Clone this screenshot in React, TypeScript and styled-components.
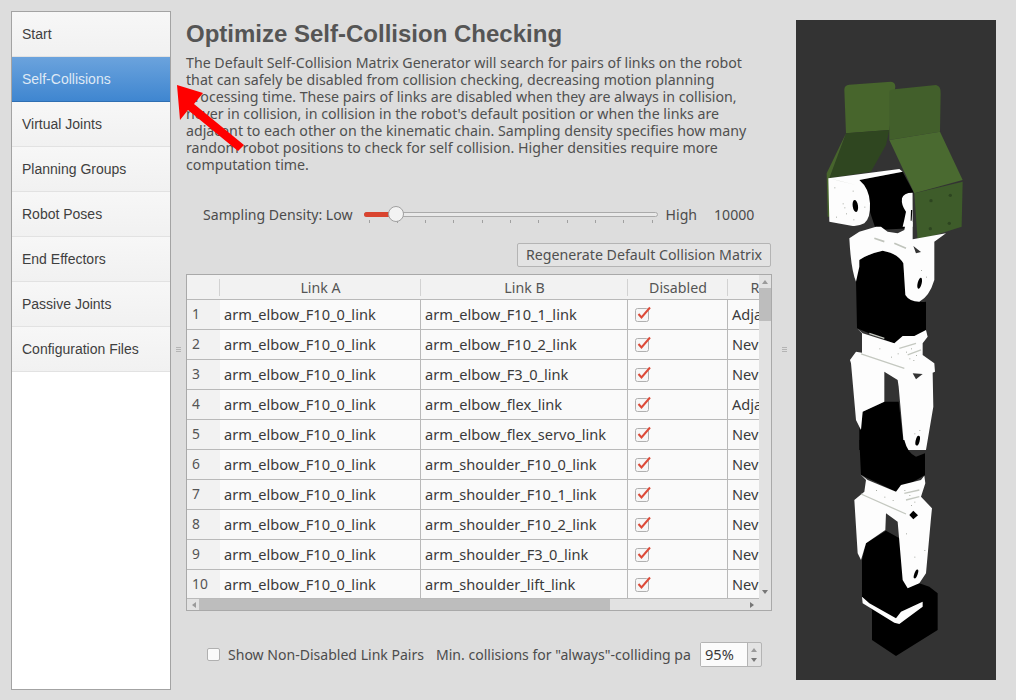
import React from "react";
import styled, { createGlobalStyle } from "styled-components";

const Global = createGlobalStyle`
  html, body { margin: 0; padding: 0; background: #dddddd; }
  #root { width: 1016px; height: 700px; }
  * { box-sizing: border-box; }
`;

const UI = `"Noto Sans", "DejaVu Sans", sans-serif`;

const Page = styled.div`
  position: relative; width: 1016px; height: 700px; display: flex; overflow: hidden;
  padding: 11px 0 10px 11px; background: #dddddd; font-family: ${UI}; color: #4c4c4c;
`;
const Nav = styled.nav`
  width: 160px; flex: none; height: 679px; border: 1px solid #a3a3a3; background: #ffffff;
  display: flex; flex-direction: column;
`;
const NavItem = styled.div<{ $active?: boolean }>`
  height: 45px; flex: none; padding-left: 10px; display: flex; align-items: center;
  font: 14px "Liberation Sans", Arial, sans-serif;
  color: ${p => (p.$active ? "#dfe9f5" : "#3f3f3f")};
  background: ${p => p.$active ? "linear-gradient(#6ba3dd, #3f86d0)" : "linear-gradient(#f7f7f7, #f1f1f1)"};
  border-bottom: 1px solid ${p => (p.$active ? "#2f6fb2" : "#e2e2e2")};
`;
const Handle = styled.div<{ $w: number }>`
  width: ${p => p.$w}px; flex: none; display: flex; flex-direction: column; align-items: center;
  justify-content: center; gap: 1px; padding-bottom: 2px;
  i { display: block; width: 5px; height: 1px; background: #b4b4b4; }
`;
const Main = styled.main`
  width: 586px; flex: none; display: flex; flex-direction: column;
`;
const Title = styled.h1`
  margin: 8px 0 0; font: bold 24px/29px "Liberation Sans", Arial, sans-serif; color: #555555; white-space: nowrap;
`;
const Intro = styled.p`
  margin: 6px 0 0; font-size: 14.2px; line-height: 17px; white-space: nowrap; color: #505050;
`;
const SliderRow = styled.div`
  margin-top: 29px; height: 24px; padding-left: 17px; display: flex; align-items: center;
  font-size: 14.1px; white-space: nowrap;
`;
const Track = styled.div`
  position: relative; width: 294px; height: 5px; margin: 0 8px 0 11px; border: 1px solid #aaaaaa;
  border-radius: 3px; background: #e9e9e9;
`;
const TrackFill = styled.div`
  position: absolute; left: -1px; top: -1px; width: 30px; height: 5px; border-radius: 3px; background: #d9442f;
`;
const Knob = styled.div`
  position: absolute; left: 23px; top: -7px; width: 16px; height: 16px; border-radius: 50%;
  background: #f3f3f3; border: 1px solid #a0a0a0;
`;
const Ticks = styled.div`
  position: absolute; left: 4px; right: 4px; top: 7px; display: flex; justify-content: space-between;
  i { width: 1px; height: 3px; background: #a0a0a0; }
`;
const Value = styled.span`
  margin-left: 17px;
`;
const ButtonRow = styled.div`
  margin-top: 17px; display: flex; justify-content: flex-end; padding-right: 1px;
`;
const Btn = styled.button`
  height: 24px; width: 254px; padding: 0 0 1px; border: 1px solid #b4b4b4; border-radius: 2px; background: #e3e3e3;
  font: 14.2px ${UI}; color: #505050; white-space: nowrap;
`;
const TableFrame = styled.div`
  margin-top: 7px; width: 586px; height: 337px; border: 1px solid #a9a9a9; background: #fafafa;
  display: grid; grid-template-columns: 572px 12px; grid-template-rows: 323px 12px;
`;
const TableView = styled.div`
  overflow: hidden; display: flex; flex-direction: column;
`;
const Row = styled.div`
  display: grid; grid-template-columns: 33px 201px 207px 100px 94px; flex: none; height: 30px;
  border-bottom: 1px solid #b9b9b9; font-size: 14.6px; color: #3a3a3a;
`;
const HeaderRow = styled(Row)`
  height: 25px; background: #f2f2f2; color: #555555; border-bottom: 1px solid #b9b9b9; font-size: 14.2px;
`;
const Head = styled.div`
  position: relative; display: flex; align-items: center; justify-content: center; white-space: nowrap; overflow: hidden;
  &::after { content: ""; position: absolute; right: 0; top: 4px; bottom: 3px; width: 1px; background: #d2d2d2; }
`;
const RowNum = styled.div`
  background: #f2f2f2; display: flex; align-items: center; padding: 0 0 2px 5px; font-size: 13.8px; color: #555555;
`;
const Cell = styled.div`
  display: flex; align-items: center; padding: 0 0 2px 4px; border-right: 1px solid #b9b9b9; overflow: hidden; white-space: nowrap; background: #fafafa;
`;
const CheckCell = styled(Cell)`
  padding-left: 7px;
`;
const LastCell = styled(Cell)`
  border-right: 0;
`;
const VBar = styled.div`
  background: #e2e2e2; display: flex; flex-direction: column; align-items: center; position: relative;
`;
const ThumbV = styled.div`
  margin-top: 13px; width: 12px; height: 33px; background: #bdbdbd;
`;
const Arrow = styled.span<{ $dir: string }>`
  position: absolute; width: 0; height: 0;
  ${p => p.$dir === "up" && "top: 5px; left: 3px; border: 3px solid transparent; border-top: 0; border-bottom: 4px solid #9a9a9a;"}
  ${p => p.$dir === "down" && "bottom: 4px; left: 3px; border: 3px solid transparent; border-bottom: 0; border-top: 4px solid #777777;"}
  ${p => p.$dir === "left" && "left: 5px; top: 3px; border: 3px solid transparent; border-left: 0; border-right: 4px solid #9a9a9a;"}
  ${p => p.$dir === "right" && "right: 5px; top: 3px; border: 3px solid transparent; border-right: 0; border-left: 4px solid #777777;"}
`;
const HBar = styled.div`
  position: relative; background: #e2e2e2; padding-left: 12px; border-top: 1px solid #b9b9b9;
`;
const ThumbH = styled.div`
  width: 411px; height: 11px; background: #bdbdbd;
`;
const Corner = styled.div`
  background: #e2e2e2;
`;
const BottomRow = styled.div`
  margin-top: 30px; height: 28px; padding: 0 0 2px 21px; display: flex; align-items: center; font-size: 14.05px; white-space: nowrap;
`;
const Box = styled.span`
  width: 13px; height: 13px; border: 1px solid #b0b0b0; border-radius: 2px; background: #fafafa; margin-right: 8px;
`;
const MinLabel = styled.span`
  margin-left: 12px; width: 255px; overflow: hidden;
`;
const Spin = styled.div`
  margin-left: 9px; height: 25px; width: 62px; display: flex; border: 1px solid #b4b4b4; border-radius: 2px; background: #e3e3e3;
`;
const SpinValue = styled.div`
  width: 47px; background: #fbfbfb; border-right: 1px solid #b4b4b4; padding-left: 4px; display: flex; align-items: center; color: #3a3a3a; font-size: 14.6px;
`;
const SpinArrows = styled.div`
  flex: 1; position: relative;
`;
const Viewer = styled.div`
  width: 200px; height: 660px; flex: none; margin-top: 9px; background: #333333; overflow: hidden;
  svg { display: block; }
`;
const Overlay = styled.svg`
  position: absolute; left: 170px; top: 78px; pointer-events: none;
`;

const navItems = ["Start", "Self-Collisions", "Virtual Joints", "Planning Groups", "Robot Poses", "End Effectors", "Passive Joints", "Configuration Files"];
const rows = [
  ["arm_elbow_F10_1_link", "Adjacent Links"],
  ["arm_elbow_F10_2_link", "Never in Collision"],
  ["arm_elbow_F3_0_link", "Never in Collision"],
  ["arm_elbow_flex_link", "Adjacent Links"],
  ["arm_elbow_flex_servo_link", "Never in Collision"],
  ["arm_shoulder_F10_0_link", "Never in Collision"],
  ["arm_shoulder_F10_1_link", "Never in Collision"],
  ["arm_shoulder_F10_2_link", "Never in Collision"],
  ["arm_shoulder_F3_0_link", "Never in Collision"],
  ["arm_shoulder_lift_link", "Never in Collision"],
];

const Check = () => (
  <svg width="17" height="16" viewBox="0 0 17 16">
    <rect x="0.5" y="2.5" width="13" height="13" rx="2" fill="#f6f6f6" stroke="#b0b0b0" />
    <path d="M3.5 8 L6.5 11.5 L15 1.5" fill="none" stroke="#dc4a38" strokeWidth="2" />
  </svg>
);

const specks1 = [[115, 352], [140, 400], [145, 412], [170, 362], [205, 410], [172, 448], [120, 440], [150, 430]];
const specks2 = [[240, 395], [250, 415], [262, 420], [270, 405], [255, 385], [215, 400], [195, 410], [160, 385], [285, 150], [300, 170], [265, 640], [280, 630]];
const specks3 = [[150, 150], [175, 170], [200, 180], [235, 150], [250, 165], [265, 185], [255, 195], [295, 330], [240, 280], [265, 350]];
const Specks = ({ pts }: { pts: number[][] }) => (
  <g fill="#a8aca4">{pts.map(([x, y]) => <rect key={`${x}-${y}`} x={x} y={y} width="3" height="3" />)}</g>
);

const Robot = () => (
  <svg width="200" height="660" viewBox="796 20 200 660">
    <g transform="translate(796 70) scale(.3333)">
      <path d="M190 330 L320 305 L352 365 L345 475 L240 480 Z" fill="#000" />
      <path d="M145 60 Q145 45 160 44 L285 35 Q298 36 298 50 L280 180 L150 190 Z" fill="#47652c" />
      <path d="M150 190 L280 180 L270 225 L225 305 L100 325 Z" fill="#2f4620" />
      <path d="M150 190 L92 310 L95 440 L103 440 L100 325 Z" fill="#47652c" />
      <path d="M97 325 L310 297 L320 305 L190 330 Q220 355 222 400 Q224 445 205 460 Q185 470 170 468 L100 455 Z" fill="#fdfdfd" />
      <path d="M100 325 L180 345 L130 333 Z" fill="#c4c8c0" />
      <ellipse cx="178" cy="408" rx="8" ry="18" transform="rotate(-8 178 408)" fill="#000" />
      <Specks pts={specks1} />
      <path d="M318 385 Q322 368 350 368 L350 470 L320 470 Q325 450 330 425 Q315 405 318 385 Z" fill="#fdfdfd" />
      <path d="M345 420 L349 420 L347 452 L344 452 Z" fill="#000" />
      <path d="M280 65 Q280 60 295 58 L420 45 Q435 48 434 70 L432 185 L280 210 Z" fill="#425f2b" />
      <path d="M280 210 L432 185 L500 330 L355 370 Z" fill="#4a6a30" />
      <path d="M355 370 L500 335 L497 470 L365 512 Z" fill="#3e5c2a" />
      <g fill="#2d4520">
        <circle cx="405" cy="392" r="5" /><circle cx="463" cy="376" r="5" />
        <circle cx="403" cy="476" r="5" /><circle cx="460" cy="460" r="5" />
      </g>
    </g>
    <g transform="translate(826 220) scale(.3333)">
      <path d="M100 120 Q130 100 170 92 Q215 100 232 130 L240 220 Q260 250 300 245 L300 335 L215 375 L93 325 L90 180 Z" fill="#000" />
      <path d="M70 55 L100 35 L150 20 L165 20 L185 35 L215 40 L235 30 L240 5 L260 5 L260 58 L360 40 L325 65 L325 180 Q310 230 280 245 Q250 245 238 225 L232 130 Q215 100 170 92 Q130 100 100 120 L100 140 L90 185 Q75 150 70 55 Z" fill="#fdfdfd" />
      <ellipse cx="281" cy="190" rx="6" ry="17" transform="rotate(14 281 190)" fill="#000" />
      <path d="M262 78 L270 100 L285 96 Z" fill="#333" />
      <path d="M145 55 L175 65 M205 70 L240 85" stroke="#c0c4bc" strokeWidth="5" />
      <path d="M175 545 L110 575 L100 630 L100 690 L235 690 L218 545 Z" fill="#000" />
      <path d="M93 325 L110 340 L205 370 L230 348 L265 348 L300 330 L305 350 L290 370 L290 405 L325 430 L327 455 L320 458 L322 560 L300 690 L235 690 L218 500 L215 480 L175 455 L175 545 L110 575 L105 630 L90 600 L75 430 L72 420 L90 395 L108 398 L108 340 Z" fill="#fdfdfd" />
      <path d="M105 402 L235 445 M130 340 L175 355 M220 385 L270 370 M245 405 L285 390" stroke="#c4c8c0" strokeWidth="4" />
      <Specks pts={specks2} />
      <path d="M260 460 L270 478 L290 462 Z" fill="#333" />
      <ellipse cx="275" cy="662" rx="6" ry="15" transform="rotate(14 275 662)" fill="#000" />
    </g>
    <g transform="translate(826 440) scale(.3333)">
      <path d="M100 0 L235 0 Q245 40 270 50 L297 40 L297 105 L210 155 L105 105 Z" fill="#000" />
      <path d="M180 272 L120 310 L108 360 L108 470 L138 510 L138 600 L210 648 L335 570 L335 460 L310 440 L280 430 L230 300 Z" fill="#000" />
      <path d="M103 103 L125 120 L210 155 L225 135 L285 120 L295 107 L298 130 L285 170 L318 205 L315 235 L300 400 L280 430 L245 445 L230 420 L215 245 L180 220 L178 270 L120 310 L105 360 L95 340 L85 180 L115 155 L120 120 Z" fill="#fdfdfd" />
      <path d="M105 162 L240 222 M235 160 L280 150 M240 180 L280 170" stroke="#c4c8c0" strokeWidth="4" />
      <Specks pts={specks3} />
      <path d="M250 225 L262 212 L276 226 L262 238 Z" fill="#000" />
      <ellipse cx="270" cy="402" rx="5" ry="14" transform="rotate(20 270 402)" fill="#000" />
      <path d="M108 470 L130 490 L210 535 L225 515 L280 490 L290 485 L290 500 L220 552 L205 548 L110 490 Z" fill="#fdfdfd" />
    </g>
  </svg>
);

export default function App() {
  return (
    <Page>
      <Global />
      <Nav>
        {navItems.map((n, i) => <NavItem key={n} $active={i === 1}>{n}</NavItem>)}
      </Nav>
      <Handle $w={15}><i /><i /><i /></Handle>
      <Main>
        <Title>Optimize Self-Collision Checking</Title>
        <Intro>
          The Default Self-Collision Matrix Generator will search for pairs of links on the robot<br />
          that can safely be disabled from collision checking, decreasing motion planning<br />
          processing time. These pairs of links are disabled when they are always in collision,<br />
          never in collision, in collision in the robot's default position or when the links are<br />
          adjacent to each other on the kinematic chain. Sampling density specifies how many<br />
          random robot positions to check for self collision. Higher densities require more<br />
          computation time.
        </Intro>
        <SliderRow>
          Sampling Density: Low
          <Track>
            <TrackFill />
            <Ticks>{Array.from({ length: 11 }).map((_, i) => <i key={i} />)}</Ticks>
            <Knob />
          </Track>
          High
          <Value>10000</Value>
        </SliderRow>
        <ButtonRow><Btn>Regenerate Default Collision Matrix</Btn></ButtonRow>
        <TableFrame>
          <TableView>
            <HeaderRow>
              <Head /><Head>Link A</Head><Head>Link B</Head><Head>Disabled</Head><Head>Reason</Head>
            </HeaderRow>
            {rows.map((r, i) => (
              <Row key={i}>
                <RowNum>{i + 1}</RowNum>
                <Cell>arm_elbow_F10_0_link</Cell>
                <Cell>{r[0]}</Cell>
                <CheckCell><Check /></CheckCell>
                <LastCell>{r[1]}</LastCell>
              </Row>
            ))}
          </TableView>
          <VBar><Arrow $dir="up" /><ThumbV /><Arrow $dir="down" /></VBar>
          <HBar><Arrow $dir="left" /><ThumbH /><Arrow $dir="right" /></HBar>
          <Corner />
        </TableFrame>
        <BottomRow>
          <Box />
          Show Non-Disabled Link Pairs
          <MinLabel>Min. collisions for "always"-colliding pairs</MinLabel>
          <Spin>
            <SpinValue>95%</SpinValue>
            <SpinArrows><Arrow $dir="up" /><Arrow $dir="down" /></SpinArrows>
          </Spin>
        </BottomRow>
      </Main>
      <Handle $w={24}><i /><i /><i /></Handle>
      <Viewer><Robot /></Viewer>
      <Overlay width="80" height="80" viewBox="170 78 80 80">
        <path d="M177 85 L203 93 L194 104 L244 145 L238 151 L188 110 L180 120 Z" fill="#ff0000" />
      </Overlay>
    </Page>
  );
}
